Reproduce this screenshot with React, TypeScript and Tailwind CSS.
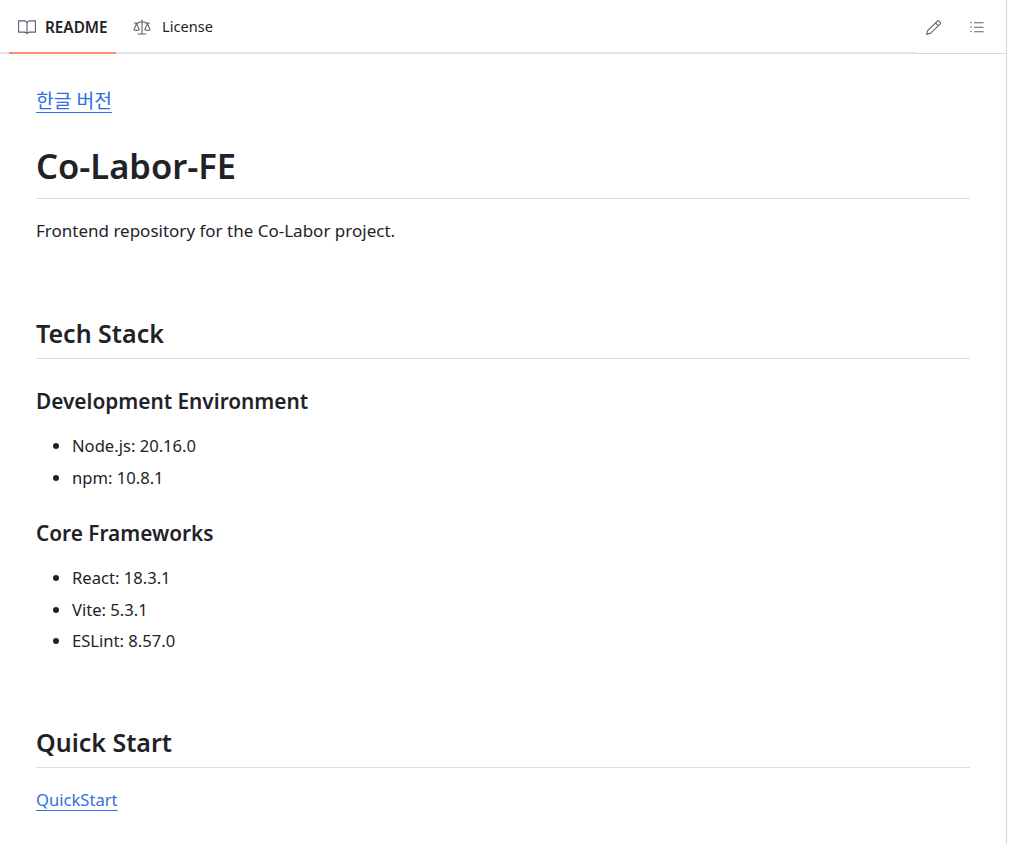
import { GoBook, GoLaw, GoListUnordered, GoPencil } from 'react-icons/go';

const font = { fontFamily: '"Noto Sans", "Noto Sans CJK KR", sans-serif' };

function Bullets({ items, className }: { items: string[]; className: string }) {
  return (
    <ul className={`list-disc pl-9 text-[16.6px] leading-[26px] ${className}`}>
      {items.map((item) => (
        <li key={item} className="mb-[5.7px]">{item}</li>
      ))}
    </ul>
  );
}

export default function App() {
  return (
    <div className="h-[844px] w-[1007px] overflow-hidden border-r border-[#d1d9e0] bg-white text-[#1f2328]" style={font}>
      {/* Tabs */}
      <div className="flex h-[54px] items-stretch justify-between border-b border-[#d1d9e0]">
        <div className="-mb-px flex grow items-stretch border-b-2 border-[#dfe3e7] pl-[9px]">
          <div className="-mb-[2px] flex w-[107px] items-center gap-[9px] border-b-2 border-[#fd8c73] pt-[2px] pl-[9px] text-[15.3px] font-semibold">
            <GoBook className="size-[18px] text-[#59636e]" />
            README
          </div>
          <div className="ml-[9px] flex items-center gap-[11px] pt-[2px] pl-2 text-[14.6px]">
            <GoLaw className="size-[18px] text-[#59636e]" />
            License
          </div>
        </div>
        <div className="flex w-[89px] items-center gap-[26px] pt-px pl-[8px] text-[#59636e]">
          <GoPencil className="size-[17px]" />
          <GoListUnordered className="size-[18px]" />
        </div>
      </div>

      {/* README body */}
      <article className="ml-9 w-[934px] pt-[33px]">
        <a className="block w-fit text-[19.3px] leading-[28px] text-[#2f6fe0] underline decoration-1 underline-offset-[4px]">한글 버전</a>
        <h1 className="mt-[32px] h-[52px] border-b border-[#d8dee4] text-[34.5px] leading-[38px] font-semibold">Co-Labor-FE</h1>
        <p className="mt-[19px] text-[17px] leading-[26px]">Frontend repository for the Co-Labor project.</p>

        <h2 className="mt-[74px] h-[41px] border-b border-[#d8dee4] text-[25px] leading-[30px] font-semibold">Tech Stack</h2>
        <h3 className="mt-[29px] text-[20.8px] leading-[26px] font-semibold">Development Environment</h3>
        <Bullets className="mt-[19px]" items={['Node.js: 20.16.0', 'npm: 10.8.1']} />
        <h3 className="mt-[29.3px] text-[20.8px] leading-[26px] font-semibold">Core Frameworks</h3>
        <Bullets className="mt-[19px]" items={['React: 18.3.1', 'Vite: 5.3.1', 'ESLint: 8.57.0']} />

        <h2 className="mt-[73px] h-[41px] border-b border-[#d8dee4] text-[25px] leading-[30px] font-semibold">Quick Start</h2>
        <a className="mt-[19px] block w-fit text-[16.6px] leading-[26px] text-[#2f6fe0] underline decoration-1 underline-offset-[4px]">QuickStart</a>
      </article>
    </div>
  );
}
